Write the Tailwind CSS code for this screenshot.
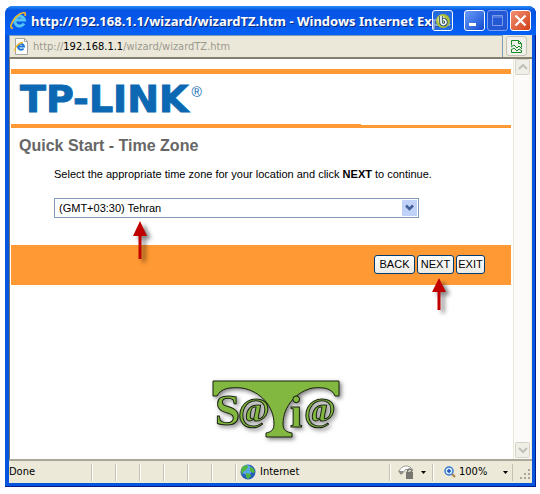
<!DOCTYPE html>
<html lang="en">
<head>
    <meta charset="UTF-8">
    <meta name="viewport" content="width=device-width, initial-scale=1.0">
    <title>Quick Start - Time Zone</title>
    <script src="https://cdn.jsdelivr.net/npm/@tailwindcss/browser@4"></script>
</head>
<body class="bg-[#fefdff] font-['Liberation_Sans',sans-serif] text-black">
    <!-- Browser window -->
    <div class="min-h-screen flex flex-col pt-[6px] pr-1 pb-[7px] pl-[5px]">
        <div class="flex-1 flex flex-col rounded-t-lg bg-[#0855dd] shadow-[inset_-1px_-1px_0_#001c90] px-1 pb-1">

            <!-- Title bar -->
            <header class="-mx-1 h-[29px] flex items-center rounded-t-lg bg-linear-to-b from-[#2b8cf5] from-0% via-[#0653e2] via-15% to-[#0560f5] pl-1 pr-[5px]">
                <svg class="w-5 h-5 shrink-0" viewBox="0 0 20 20" fill="none">
                    <path d="M15 12.500A5 5 0 1 1 15.500 9H7" stroke="#55c4f5" stroke-width="3" />
                    <path d="M4 17C0 18 2 11 7 6S18 0 16 5" stroke="#f0b72c" stroke-width="1.700" />
                </svg>
                <h1 class="flex-1 min-w-0 pl-[2px] text-white text-[13px] leading-5 font-bold font-['Noto_Sans','Open_Sans',sans-serif] whitespace-nowrap [text-shadow:1px_1px_0_#0a2a80]">
                    http://192.168.1.1/wizard/wizardTZ.htm - Windows Internet Exp...
                </h1>
                <div class="relative z-10 flex shrink-0">
                    <button type="button" aria-label="Capture" class="absolute right-[78px] top-0 w-[21px] h-[21px] rounded-[3px] border border-white bg-[#3b78d8]/60 flex items-center justify-center">
                        <svg class="w-4 h-4" viewBox="0 0 16 16" fill="none">
                            <circle cx="8" cy="8" r="7" fill="#a9bd39" />
                            <circle cx="6.500" cy="6.500" r="4" fill="#d8df7c" />
                            <path d="M6 3v6a2.500 2.500 0 1 0 2-2.300" stroke="#17406e" stroke-width="3.400" />
                            <path d="M6 3v6a2.500 2.500 0 1 0 2-2.300" stroke="#fff" stroke-width="1.700" />
                        </svg>
                    </button>
                    <div class="flex gap-[2px]">
                        <button type="button" aria-label="Minimize" class="w-[21px] h-[21px] rounded-[3px] border border-white bg-linear-to-br from-[#6b9cf8] to-[#1248d0]">
                            <svg class="w-full h-full" viewBox="0 0 19 19"><path d="M4 12h7v3H4z" fill="#fff" /></svg>
                        </button>
                        <button type="button" aria-label="Maximize" disabled class="w-[21px] h-[21px] rounded-[3px] border border-[#7da0ee] bg-[#2457d3]">
                            <svg class="w-full h-full" viewBox="0 0 19 19" fill="none" stroke="#7c9bea"><path d="M4.500 4.500h10v10h-10zM4 6h11" /></svg>
                        </button>
                        <button type="button" aria-label="Close" class="w-[21px] h-[21px] rounded-[3px] border border-white bg-linear-to-br from-[#f09070] to-[#d03c10]">
                            <svg class="w-full h-full" viewBox="0 0 19 19" stroke="#fff" stroke-width="2.200"><path d="M4.500 4.500l10 10M14.500 4.500l-10 10" /></svg>
                        </button>
                    </div>
                </div>
            </header>

            <!-- Address bar -->
            <div class="h-6 flex items-center bg-[#ece9d8] border-b-2 border-[#827f70]">
                <div class="flex-1 min-w-0 self-stretch flex items-center gap-1 border border-b-0 border-[#7f9db9] bg-[#ebe8da] pl-1">
                    <svg class="w-[15px] h-[17px]" viewBox="0 0 15 17" fill="none">
                        <path d="M1.500 .5h9l3 3v13h-12z" fill="#fff" stroke="#a5a5a0" />
                        <path d="M10.500 .5v3h3" stroke="#a5a5a0" />
                        <path d="M9.500 10.500A3 3 0 1 1 10 8.500H4" stroke="#1c76d8" stroke-width="2" />
                        <path d="M2 13C-1 13 3 5 9 4.500" stroke="#edb32c" stroke-width="1.300" />
                    </svg>
                    <p class="text-[11px] leading-4 text-[#9b998e] font-['DejaVu_Sans_Condensed','DejaVu_Sans',sans-serif]">http://<span class="text-black">192.168.1.1</span>/wizard/wizardTZ.htm</p>
                </div>
                <button type="button" aria-label="Compatibility view" class="ml-[3px] mr-[5px] w-[21px] h-5 rounded-[3px] border border-[#c5c3b8] bg-[#f1f0ea] flex items-center justify-center">
                    <svg class="w-[13px] h-[15px]" viewBox="0 0 13 15" fill="none" stroke="#168a25">
                        <path d="M1.500 6.500v-5h7l3 3v4M8.500 1.500v3h3M1 8l3-2 3 3 2-2 3 3M1 11l3-2 3 3 2-2 3 2M1.500 10.500v3h10v-2" />
                    </svg>
                </button>
            </div>

            <!-- Page -->
            <div class="flex-1 flex bg-white border-l border-[#77756a]">
                <main class="flex-1 min-w-0 pt-[10px] pl-px pr-[2px]">
                    <div class="h-[5px] bg-[#ff9933]"></div>
                    <div class="h-[50px] flex items-center gap-[3px] pl-[9px] text-[#0c68b2]">
                        <span class="text-[38px] leading-10 font-bold font-['DejaVu_Sans',sans-serif] [-webkit-text-stroke:1px_#0c68b2]">TP-LINK</span>
                        <sup class="text-[14px] leading-4">®</sup>
                    </div>
                    <div class="flex items-end">
                        <div class="w-[70%] h-1 bg-[#ff9933]"></div>
                        <div class="flex-1 h-[3px] bg-[#ff9933]"></div>
                    </div>

                    <form>
                        <h2 class="pt-2 pl-2 text-[16px] leading-5 font-bold text-[#666666]">Quick Start - Time Zone</h2>
                        <div class="pt-[10px] pl-[43px] pr-[92px] pb-[27px]">
                            <label for="timezone" class="block text-[11px] leading-4 whitespace-nowrap">Select the appropriate time zone for your location and click <b>NEXT</b> to continue.</label>
                            <div class="relative mt-4">
                                <select id="timezone" class="block w-full h-5 appearance-none border border-[#7f9db9] bg-white pl-1 text-[11px] leading-4">
                                    <option>(GMT+03:30) Tehran</option>
                                </select>
                                <svg class="absolute right-[2px] top-[2px] w-[15px] h-4 pointer-events-none" viewBox="0 0 15 16" fill="none">
                                    <rect width="15" height="16" rx="1" fill="#c1d2f8" />
                                    <path d="M4 5.500l3.500 3.500L11 5.500" stroke="#405f96" stroke-width="2.500" />
                                </svg>
                                <svg class="absolute left-[77px] top-[22px] w-6 h-11 pointer-events-none drop-shadow-[4px_3px_2px_#00000080]" viewBox="0 0 24 44">
                                    <path d="M9 1l7 15h-5.500v23h-3V16H2z" fill="#c00000" />
                                </svg>
                            </div>
                        </div>
                        <div class="h-10 bg-[#ff9933] flex items-center justify-end gap-[2px] pr-[26px] pb-[2px] text-[11px] leading-4">
                            <button type="button" class="w-[41px] h-[19px] rounded-[3px] border border-[#003c74] bg-linear-to-b from-white to-[#ecebe4]">BACK</button>
                            <div class="relative flex">
                                <button type="button" class="w-[37px] h-[19px] rounded-[3px] border border-[#003c74] bg-linear-to-b from-white to-[#ecebe4]">NEXT</button>
                                <svg class="absolute left-[13px] top-[22px] w-6 h-11 pointer-events-none drop-shadow-[4px_3px_2px_#00000080]" viewBox="0 0 24 44">
                                    <path d="M9 1l7 14h-5.500v18h-3V15H2z" fill="#c00000" />
                                </svg>
                            </div>
                            <button type="button" class="w-[29px] h-[19px] rounded-[3px] border border-[#003c74] bg-linear-to-b from-white to-[#ecebe4]">EXIT</button>
                        </div>
                    </form>

                    <!-- Watermark -->
                    <div class="pt-[90px] pl-[29px] flex justify-center">
                        <svg class="w-[140px] h-[70px] drop-shadow-[2px_2px_2px_#00000080]" viewBox="0 0 140 70" fill="#82b83f" stroke="#182010">
                            <path d="M7 6h126v15h-4c-3-8-12-9-22-8-16 3-30 18-30 36 0 6 3 8 9 9v4H60v-4c5-1 8-3 8-9 0-18-14-33-32-36-12-1-21 0-25 8H7z" />
                            <g font-family="Liberation Serif, serif" font-weight="bold">
                                <text x="9" y="50" font-size="45">S</text>
                                <text x="32" y="46" font-size="34">@</text>
                                <text x="84" y="52" font-size="44">i</text>
                                <text x="98" y="46" font-size="34">@</text>
                            </g>
                        </svg>
                    </div>
                </main>

                <!-- Scroll bar -->
                <div class="w-[19px] flex flex-col justify-between items-center border-x border-[#ece9d8] bg-[#fcfbf9]">
                    <svg class="w-4 h-[17px]" viewBox="0 0 16 17" fill="none"><rect x=".5" y=".5" width="14" height="15" rx="1" fill="#efeee7" stroke="#d5d3c8" /><path d="M4 10l4-4 4 4" stroke="#c2c0b6" stroke-width="2.200" /></svg>
                    <svg class="w-4 h-[17px]" viewBox="0 0 16 17" fill="none"><rect x=".5" y=".5" width="14" height="15" rx="1" fill="#efeee7" stroke="#d5d3c8" /><path d="M4 6l4 4 4-4" stroke="#c2c0b6" stroke-width="2.200" /></svg>
                </div>
            </div>

            <!-- Status bar -->
            <footer class="h-6 shrink-0 flex items-center bg-[#ece9d8] border-t-2 border-[#aca899] text-[11px] leading-4 font-['DejaVu_Sans_Condensed','DejaVu_Sans',sans-serif]">
                <span class="w-[82px]">Done</span>
                <div class="flex h-[17px]">
                    <i class="w-6 border-l border-[#c5c2b2] shadow-[inset_1px_0_0_#fff]"></i>
                    <i class="w-6 border-l border-[#c5c2b2] shadow-[inset_1px_0_0_#fff]"></i>
                    <i class="w-6 border-l border-[#c5c2b2] shadow-[inset_1px_0_0_#fff]"></i>
                    <i class="w-6 border-l border-[#c5c2b2] shadow-[inset_1px_0_0_#fff]"></i>
                    <i class="w-6 border-l border-[#c5c2b2] shadow-[inset_1px_0_0_#fff]"></i>
                    <i class="w-6 border-l border-[#c5c2b2] shadow-[inset_1px_0_0_#fff]"></i>
                </div>
                <div class="flex-1 h-[17px] flex items-center gap-1 border-l border-[#c5c2b2] shadow-[inset_1px_0_0_#fff] pl-1">
                    <svg class="w-4 h-4" viewBox="0 0 16 16">
                        <circle cx="8" cy="8" r="7.500" fill="#2860b8" />
                        <circle cx="7" cy="6" r="5" fill="#58a5e8" />
                        <path d="M2 3l5-2 1 2-2 3-3 2-1 3-1-4zM10 3l3 1 2 4-2 1-3-2zM6 9l4 1 1 2-3 3-2-2z" fill="#53b63c" />
                    </svg>
                    Internet
                </div>
                <button type="button" aria-label="Protected mode" class="w-[43px] h-[17px] flex items-center gap-[7px] border-l border-[#c5c2b2] shadow-[inset_1px_0_0_#fff] pl-2">
                    <svg class="w-4 h-4" viewBox="0 0 16 16">
                        <path d="M1 7C4 1 11 0 15 6l-2 2-5-3-4 5z" fill="#fff" stroke="#99988f" />
                        <path d="M0 7h6l-3 4z" fill="#8d8c86" />
                        <rect x="8" y="8" width="7" height="7" fill="#77766f" />
                        <path d="M9.500 9V7a2 2 0 0 1 4 0v2" fill="none" stroke="#77766f" stroke-width="1.300" />
                    </svg>
                    <svg class="w-[5px] h-[3px]" viewBox="0 0 5 3"><path d="M0 0h5L2.500 3z" /></svg>
                </button>
                <button type="button" class="w-20 h-[17px] flex items-center gap-[3px] border-l border-[#c5c2b2] shadow-[inset_1px_0_0_#fff] pl-[11px]">
                    <svg class="w-3 h-3" viewBox="0 0 12 12" fill="none">
                        <path d="M8 8l3 3" stroke="#b08a50" stroke-width="2.400" />
                        <circle cx="5" cy="5" r="4" fill="#d8ecff" stroke="#3a78d0" stroke-width="1.500" />
                        <path d="M5 3v4M3 5h4" stroke="#1c50b8" stroke-width="1.500" />
                    </svg>
                    100%
                    <svg class="ml-auto mr-1 w-[5px] h-[3px]" viewBox="0 0 5 3"><path d="M0 0h5L2.500 3z" /></svg>
                </button>
                <div class="w-5 h-[17px] border-l border-[#c5c2b2] flex items-end justify-end">
                    <svg class="w-3 h-3" viewBox="0 0 12 12" fill="#aca899"><path d="M8 0h2v2H8zM4 4h2v2H4zM8 4h2v2H8zM0 8h2v2H0zM4 8h2v2H4zM8 8h2v2H8z" /></svg>
                </div>
            </footer>
        </div>
    </div>
</body>
</html>
